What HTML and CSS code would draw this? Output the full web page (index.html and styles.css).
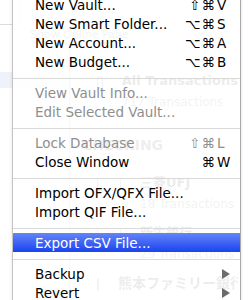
FILE: index.html
```html
<!DOCTYPE html>
<html lang="en">
<head>
  <meta charset="UTF-8">
  <title>File Menu</title>
  <link rel="stylesheet" href="styles.css">
</head>
<body>
  <div class="window">
    <div class="toolbar">
      <div class="tool-btn"></div>
      <span class="pane-label">Show Online Pane</span>
    </div>
    <div class="content">
      <div class="sidebar">
        <div class="source selected"></div>
      </div>
      <div class="list">
        <div class="account first">
          <div class="acct-icon"></div>
          <div class="acct-text">
            <div class="acct-name">All Transactions</div>
            <div class="acct-count">717 Transactions</div>
          </div>
        </div>
        <div class="group">CHECKING</div>
        <div class="account">
          <div class="acct-icon"></div>
          <div class="acct-text">
            <div class="acct-name">三菱UFJ</div>
            <div class="acct-count">18 Transactions</div>
          </div>
        </div>
        <div class="account">
          <div class="acct-icon"></div>
          <div class="acct-text">
            <div class="acct-name">新生銀行</div>
            <div class="acct-count">29 Transactions</div>
          </div>
        </div>
        <div class="account">
          <div class="acct-icon"></div>
          <div class="acct-text">
            <div class="acct-name big">熊本ファミリー銀行</div>
          </div>
        </div>
      </div>
      <div class="edge"></div>
    </div>
  </div>

  <!-- file menu, dropped over the window -->
  <div class="menu">
    <div class="item"><span class="label">New Vault...</span><span class="shortcut"><span class="mods">⇧⌘</span><span class="key">V</span></span></div>
    <div class="item"><span class="label">New Smart Folder...</span><span class="shortcut"><span class="mods">⌥⌘</span><span class="key">S</span></span></div>
    <div class="item"><span class="label">New Account...</span><span class="shortcut"><span class="mods">⌥⌘</span><span class="key">A</span></span></div>
    <div class="item"><span class="label">New Budget...</span><span class="shortcut"><span class="mods">⌥⌘</span><span class="key">B</span></span></div>
    <div class="sep"></div>
    <div class="item disabled"><span class="label">View Vault Info...</span></div>
    <div class="item disabled"><span class="label">Edit Selected Vault...</span></div>
    <div class="sep"></div>
    <div class="item disabled"><span class="label">Lock Database</span><span class="shortcut"><span class="mods">⇧⌘</span><span class="key">L</span></span></div>
    <div class="item"><span class="label">Close Window</span><span class="shortcut"><span class="mods">⌘</span><span class="key">W</span></span></div>
    <div class="sep"></div>
    <div class="item"><span class="label">Import OFX/QFX File...</span></div>
    <div class="item"><span class="label">Import QIF File...</span></div>
    <div class="sep"></div>
    <div class="item active"><span class="label">Export CSV File...</span></div>
    <div class="sep"></div>
    <div class="item"><span class="label">Backup</span>
      <svg class="arrow" width="8" height="10" viewBox="0 0 8 10"><polygon points="0,0 8,5 0,10" fill="#6b6b6b"/></svg>
    </div>
    <div class="item"><span class="label">Revert</span>
      <svg class="arrow" width="8" height="10" viewBox="0 0 8 10"><polygon points="0,0 8,5 0,10" fill="#6b6b6b"/></svg>
    </div>
  </div>
</body>
</html>
```

FILE: styles.css
```css
body {
  margin: 0;
  width: 251px;
  height: 300px;
  overflow: hidden;
  position: relative;
  background-color: #fff;
  font-family: "DejaVu Sans", "Noto Sans CJK JP", sans-serif;
}
.window {
  height: 300px;
}
.toolbar {
  height: 45px;
  display: flex;
  align-items: flex-start;
}
.tool-btn {
  width: 19px;
  height: 24px;
  border-right: 1px solid #dcdcdc;
  border-bottom: 1px solid #dcdcdc;
  border-bottom-right-radius: 5px;
}
.pane-label {
  margin: 28px 0 0 10px;
  font-size: 11px;
  color: #888;
}
.content {
  display: grid;
  grid-template-columns: 70px 168px 13px;
  height: 255px;
}
.sidebar {
  border-right: 1px solid #bbb;
  padding-top: 27px;
}
.source {
  height: 16px;
}
.source.selected {
  background-color: #eef2fa;
}
.list {
  overflow: hidden;
  padding-top: 26px;
}
.account {
  display: flex;
  gap: 19px;
  padding-left: 27px;
  height: 50px;
}
.account.first {
  height: 66px;
}
.acct-icon {
  width: 22px;
  height: 11px;
  margin-top: 5px;
  border: 1px solid #888;
  border-radius: 2px;
}
.acct-name {
  font-size: 13px;
  font-weight: bold;
  color: #444;
  line-height: 20px;
  white-space: nowrap;
}
.acct-name.big {
  font-size: 14px;
}
.acct-count {
  font-size: 12px;
  color: #777;
  line-height: 22px;
  white-space: nowrap;
}
.group {
  padding-left: 12px;
  font-size: 14px;
  font-weight: bold;
  color: #555;
  height: 36px;
}

.menu {
  position: absolute;
  left: 12px;
  top: -5px;
  width: 227px;
  background-color: rgba(255, 255, 255, 0.9);
  border-left: 1px solid #c4c4c4;
  border-right: 1px solid #a9a9a9;
  box-shadow: 0 0 3px rgba(0, 0, 0, 0.12);
  font-size: 13.5px;
  color: #000;
}
.item {
  box-sizing: border-box;
  height: 19px;
  padding: 1px 8px 0 22px;
  line-height: 18px;
  display: flex;
  align-items: center;
  white-space: nowrap;
}
.item.disabled {
  color: #8e8e8e;
}
.item.active {
  background: linear-gradient(to bottom, #6585f8, #1a43ef);
  color: #fff;
}
.shortcut {
  margin-left: auto;
  display: flex;
}
.mods {
  text-align: right;
  letter-spacing: 1px;
}
.key {
  width: 15px;
  padding-left: 1px;
}
.arrow {
  margin-left: auto;
  margin-right: 2px;
}
.sep {
  height: 1px;
  margin: 7px 0 4px;
  background-color: #d9d9d9;
}
```
